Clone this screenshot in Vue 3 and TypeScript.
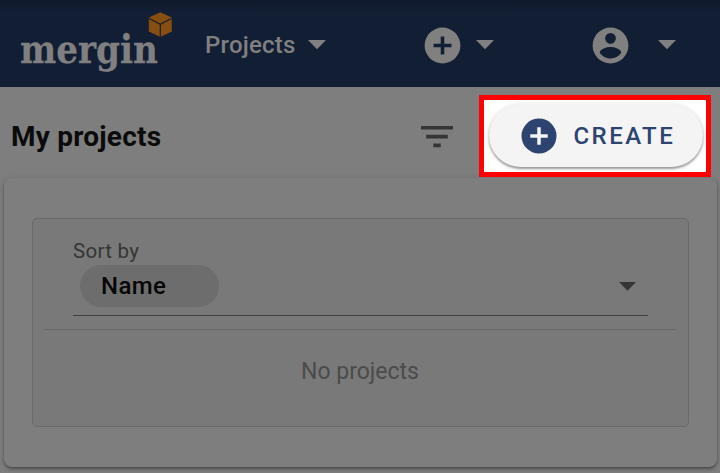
<script setup lang="ts">
import { ref } from 'vue'

const sortKey = ref('Name')
const projects = ref<string[]>([])
</script>

<template>
  <div class="page">
    <header class="bar">
      <svg class="logo" width="158" height="87" viewBox="0 0 158 87">
        <text class="wordmark" x="4" y="62.8" textLength="138" lengthAdjust="spacingAndGlyphs">mergin</text>
        <path d="M144.3 12.2 155.8 17.6v13.8L144.3 37 132.8 31.4V17.6Z" fill="#864e10" />
        <path d="M132.8 18.3l11.5 6 11.5-6M144.3 24.3V37" fill="none" stroke="#121d32" stroke-width="1.1" />
      </svg>
      <div class="nav-item projects">
        <span>Projects</span>
        <svg width="18" height="10" viewBox="0 0 18 10"><path d="M0 0h18l-9 9.3Z" fill="#808080" /></svg>
      </div>
      <div class="nav-item add">
        <svg width="43" height="43" viewBox="0 0 24 24"><path fill="#808080" d="M17 13h-4v4h-2v-4H7v-2h4V7h2v4h4m-5-9A10 10 0 0 0 2 12a10 10 0 0 0 10 10 10 10 0 0 0 10-10A10 10 0 0 0 12 2Z" /></svg>
        <svg width="18" height="10" viewBox="0 0 18 10"><path d="M0 0h18l-9 9.3Z" fill="#808080" /></svg>
      </div>
      <div class="nav-item account">
        <svg width="43" height="43" viewBox="0 0 24 24"><path fill="#808080" d="M12 19.2c-2.5 0-4.71-1.28-6-3.2.03-2 4-3.1 6-3.1s5.97 1.1 6 3.1a7.23 7.23 0 0 1-6 3.2M12 5a3 3 0 0 1 3 3 3 3 0 0 1-3 3 3 3 0 0 1-3-3 3 3 0 0 1 3-3m0-3A10 10 0 0 0 2 12a10 10 0 0 0 10 10 10 10 0 0 0 10-10c0-5.53-4.5-10-10-10Z" /></svg>
        <svg width="18" height="10" viewBox="0 0 18 10"><path d="M0 0h18l-9 9.3Z" fill="#808080" /></svg>
      </div>
    </header>

    <section class="title-row">
      <h1>My projects</h1>
      <svg class="filter" width="32" height="22" viewBox="0 0 32 22"><path fill="#353535" d="M0 0h32v3.6H0ZM5.2 8.8h21.6v3.6H5.2ZM12.3 17.6h7.4v3.6h-7.4Z" /></svg>
      <div class="highlight">
        <button class="create">
          <svg width="42" height="42" viewBox="0 0 24 24"><path fill="#2d4470" d="M17 13h-4v4h-2v-4H7v-2h4V7h2v4h4m-5-9A10 10 0 0 0 2 12a10 10 0 0 0 10 10 10 10 0 0 0 10-10A10 10 0 0 0 12 2Z" /></svg>
          <span>CREATE</span>
        </button>
      </div>
    </section>

    <main class="card">
      <div class="panel">
        <div class="select">
          <label>Sort by</label>
          <div class="value">
            <span class="chip">{{ sortKey }}</span>
            <svg width="17" height="9" viewBox="0 0 17 9"><path d="M0 0h17L8.5 8.8Z" fill="#353535" /></svg>
          </div>
        </div>
        <hr />
        <p v-if="!projects.length" class="empty">No projects</p>
      </div>
    </main>
  </div>
</template>

<style>
body {
  background: #7e7e7e;
  overflow: hidden;
}
</style>

<style scoped>
.page {
  box-sizing: border-box;
  width: 720px;
  height: 473px;
  overflow: hidden;
  background: #7e7e7e;
  font-family: Roboto, sans-serif;
}
.bar {
  box-sizing: border-box;
  display: flex;
  align-items: center;
  height: 87px;
  padding-left: 16px;
  background: linear-gradient(#101a2d, #121e34 12px);
}
.logo {
  flex: none;
  overflow: visible;
}
.wordmark {
  font-family: "DejaVu Serif", serif;
  font-weight: 700;
  font-size: 39.5px;
  fill: #808080;
  stroke: #808080;
  stroke-width: 0.3px;
}
.nav-item {
  display: flex;
  align-items: center;
  height: 90px;
  margin-top: 3px;
  color: #808080;
}
.projects {
  margin-left: 31px;
  gap: 12px;
  font-size: 24px;
  letter-spacing: 0.2px;
  font-weight: 500;
  width: 216px;
}
.projects span {
  width: 91px;
}
.add {
  gap: 12px;
  width: 168px;
}
.account {
  gap: 26px;
}
.title-row {
  display: flex;
  height: 91px;
  padding-left: 11px;
}
h1 {
  margin: 33px 0 0;
  width: 410px;
  font-size: 28px;
  letter-spacing: 0.23px;
  line-height: 33px;
  font-weight: 700;
  color: #0b0b0b;
}
.filter {
  margin-top: 38.5px;
}
.highlight {
  box-sizing: border-box;
  position: relative;
  width: 232px;
  height: 82px;
  margin: 8px 0 0 26px;
  padding: 4px 3px 0 5px;
  border: 5px solid #f00;
  background: #fff;
}
.create {
  box-sizing: border-box;
  display: flex;
  align-items: center;
  width: 214px;
  height: 63px;
  padding: 0 0 0 28.5px;
  gap: 14px;
  border: 0;
  border-radius: 32px;
  background: #f4f4f4;
  box-shadow: 0 2px 2px rgba(0, 0, 0, 0.3), 0 1px 5px rgba(0, 0, 0, 0.18);
  color: #2d4470;
  font: 500 24px Roboto, sans-serif;
  letter-spacing: 2.45px;
}
.card {
  box-sizing: border-box;
  width: 713px;
  height: 289px;
  margin-left: 4px;
  padding: 40px 28px;
  border-radius: 8px;
  background: #7e7e7e;
  box-shadow: 0 2px 3px rgba(0, 0, 0, 0.35), 0 1px 7px rgba(0, 0, 0, 0.12);
}
.panel {
  box-sizing: border-box;
  height: 209px;
  padding: 18px 12px 0 11px;
  border: 1px solid #6a6a6a;
  border-radius: 5px;
  background: #797979;
}
.select {
  box-sizing: border-box;
  height: 79px;
  margin: 0 28px 0 29px;
  border-bottom: 1px solid #404040;
}
label {
  display: block;
  height: 28px;
  font-size: 20.5px;
  letter-spacing: 0.3px;
  line-height: 28px;
  color: #353535;
}
.value {
  display: flex;
  align-items: center;
  justify-content: space-between;
  height: 42px;
  padding: 0 12px 0 7px;
}
.chip {
  box-sizing: border-box;
  width: 138.5px;
  height: 42px;
  padding-left: 21px;
  border-radius: 21px;
  background: #6d6d6d;
  color: #070707;
  font-size: 24px;
  letter-spacing: 0.4px;
  line-height: 42px;
  font-weight: 500;
}
hr {
  height: 1px;
  margin: 13px 0 0;
  border: 0;
  background: #676767;
}
.empty {
  margin: 28px 0 0;
  text-align: center;
  font-size: 23px;
  line-height: 28px;
  color: #4b4b4b;
}
</style>
